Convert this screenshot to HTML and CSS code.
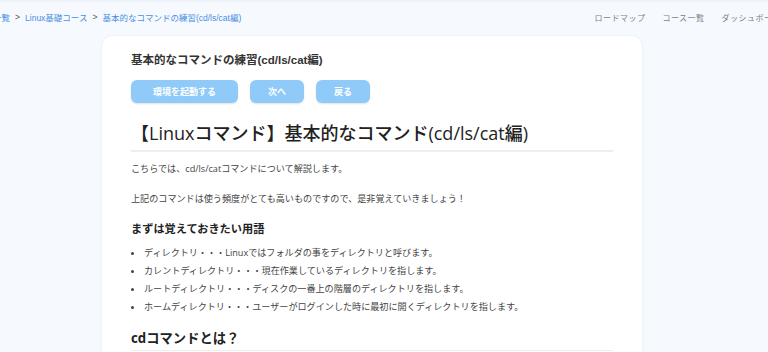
FILE: index.html
```html
<!DOCTYPE html>
<html lang="ja">
<head>
<meta charset="UTF-8">
<meta name="viewport" content="width=device-width, initial-scale=1.0">
<title>基本的なコマンドの練習(cd/ls/cat編)</title>
<link rel="stylesheet" href="styles.css">
</head>
<body>

  <header class="topbar">
    <nav class="breadcrumb">
      <a href="#">コース一覧</a>
      <span class="sep">&gt;</span>
      <a href="#">Linux基礎コース</a>
      <span class="sep">&gt;</span>
      <a href="#">基本的なコマンドの練習(cd/ls/cat編)</a>
    </nav>
    <nav class="menu">
      <a href="#">ロードマップ</a>
      <a href="#">コース一覧</a>
      <a href="#">ダッシュボード</a>
    </nav>
  </header>

  <main class="card">
    <h2 class="lesson-title">基本的なコマンドの練習(cd/ls/cat編)</h2>

    <div class="actions">
      <button class="btn btn-wide">環境を起動する</button>
      <button class="btn">次へ</button>
      <button class="btn">戻る</button>
    </div>

    <article class="content">
      <h1>【Linuxコマンド】基本的なコマンド(cd/ls/cat編)</h1>
      <p>こちらでは、cd/ls/catコマンドについて解説します。</p>
      <p>上記のコマンドは使う頻度がとても高いものですので、是非覚えていきましょう！</p>

      <h3>まずは覚えておきたい用語</h3>
      <ul>
        <li>ディレクトリ・・・Linuxではフォルダの事をディレクトリと呼びます。</li>
        <li>カレントディレクトリ・・・現在作業しているディレクトリを指します。</li>
        <li>ルートディレクトリ・・・ディスクの一番上の階層のディレクトリを指します。</li>
        <li>ホームディレクトリ・・・ユーザーがログインした時に最初に開くディレクトリを指します。</li>
      </ul>

      <h2>cdコマンドとは？</h2>
    </article>
  </main>

</body>
</html>
```

FILE: styles.css
```css
html, body {
  margin: 0;
  padding: 0;
  overflow: hidden;
}

body {
  background-color: #f6f9fe;
  border-top: 2px solid #eef2f8;
  font-family: "Liberation Sans", "Noto Sans CJK JP", sans-serif;
  color: #333;
}

/* Barra superior: migas de pan + menú */
.topbar {
  display: flex;
  align-items: center;
  justify-content: space-between;
  height: 30px;
  white-space: nowrap;
}

.breadcrumb {
  display: flex;
  align-items: center;
  margin-left: -32px;
  font-size: 8.5px;
}

.breadcrumb a {
  color: #4a90e2;
  text-decoration: none;
}

.breadcrumb .sep {
  color: #555;
  margin: 0 5px;
}

.menu {
  display: flex;
  gap: 17px;
  margin-right: -13px;
  font-size: 8px;
}

.menu a {
  color: #7b8288;
  text-decoration: none;
  letter-spacing: 0.5px;
}

/* Tarjeta principal */
.card {
  width: 482px;
  margin: 4px 0 0 102px;
  padding: 16px 29px 0;
  background: #fff;
  border-radius: 10px;
  box-shadow: 0 0 3px rgba(0, 0, 0, 0.08);
  height: 400px;
}

.lesson-title {
  margin: 0;
  font-size: 11.5px;
  line-height: 16px;
  font-weight: bold;
  color: #333;
}

.actions {
  display: flex;
  gap: 12px;
  margin-top: 12px;
}

.btn {
  width: 54px;
  height: 23px;
  border: none;
  border-radius: 6px;
  background-color: #90caf9;
  color: #fff;
  font-family: inherit;
  font-size: 9px;
  font-weight: bold;
  box-shadow: 0 1px 2px rgba(0, 0, 0, 0.12);
}

.btn-wide {
  width: 107px;
}

/* Contenido de la lección */
.content {
  font-family: "Open Sans", "Noto Sans CJK JP", sans-serif;
}

.content h1 {
  margin: 18px 0 0;
  padding-bottom: 5px;
  border-bottom: 2px solid #eeeeee;
  font-size: 18px;
  font-weight: 500;
  line-height: 24px;
  color: #222;
}

.content p {
  margin: 9px 0 0;
  font-size: 9.1px;
  line-height: 16px;
  color: #444;
}

.content p + p {
  margin-top: 14px;
}

.content h3 {
  margin: 13px 0 0;
  font-size: 11.2px;
  font-weight: bold;
  line-height: 18px;
  color: #222;
}

.content ul {
  margin: 6px 0 0;
  padding-left: 13px;
}

.content li {
  font-size: 9.1px;
  line-height: 18px;
  color: #444;
}

.content h2 {
  margin: 11px 0 0;
  padding-bottom: 1px;
  border-bottom: 1px solid #eeeeee;
  font-size: 13.3px;
  font-weight: bold;
  line-height: 22px;
  color: #222;
}
```
